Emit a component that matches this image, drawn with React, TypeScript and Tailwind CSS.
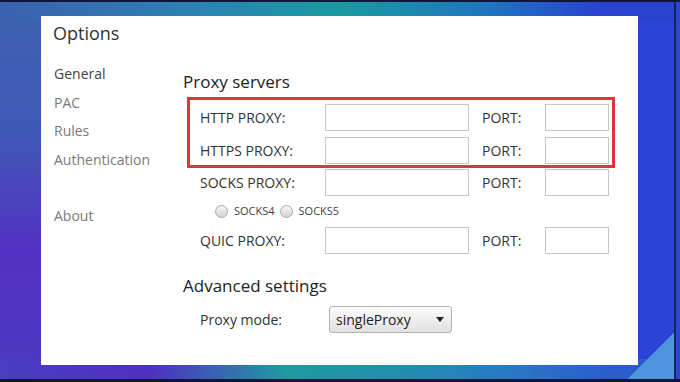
import React from "react";

function ProxyRow({ label }: { label: string }) {
  return (
    <div className="flex items-center h-[27px] pl-[17px]">
      <span className="w-[125px] text-[14px] text-[#333] leading-[27px]">{label}</span>
      <div className="w-[144px] h-[27px] border border-[#c6c6c6] bg-white" />
      <span className="ml-[13px] w-[63px] text-[14px] text-[#333] leading-[27px]">PORT:</span>
      <div className="w-[64px] h-[27px] border border-[#c6c6c6] bg-white" />
    </div>
  );
}

function Radio() {
  return (
    <span className="inline-block w-[13px] h-[13px] rounded-full border border-[#a9a9a9] bg-[linear-gradient(#f6f6f6,#d2d2d2)]" />
  );
}

export default function App() {
  return (
    <div className="w-[680px] h-[382px] overflow-hidden border-t-2 border-b-[3px] border-[#10153a] pt-[14px] pl-[41px] font-['Open_Sans',sans-serif] shadow-[inset_-4px_0_0_#2a46d6,inset_-6px_0_0_#1a2358] [background:linear-gradient(135deg,transparent_95%,#4d95dc_95%),linear-gradient(to_right,#3b60b0,#2a84b2_30%,#1a9aa0_50%,#1f74c0_72%,#2a42d0_88%)_top/100%_17px_no-repeat,linear-gradient(to_right,#4a3ec2,#5030c0_22%,#1e9aa2_42%,#2090ac_58%,#2a78c4_75%,#2a5ccc_90%)_bottom/100%_20px_no-repeat,linear-gradient(to_bottom,#3d62ae,#4058b6_35%,#5232c2_65%,#4c3ac0)_left/41px_100%_no-repeat,#2a44d4]">
      <div className="w-[597px] h-[349px] bg-white flex flex-col">
        <div className="pl-[12px] pt-[5px] text-[18px] leading-[24px] text-[#333]">Options</div>
        <div className="flex">
          <div className="w-[142px] pl-[13px] pt-[15px] flex flex-col text-[14px] leading-[28.5px] text-[#7a7a7a]">
            <span className="text-[#444]">General</span>
            <span>PAC</span>
            <span>Rules</span>
            <span>Authentication</span>
            <span className="h-[28px]" />
            <span>About</span>
          </div>
          <div className="flex-1 pt-[25px]">
            <h2 className="text-[17px] leading-[24px] text-[#222]">Proxy servers</h2>
            <div className="relative mt-[10px] flex flex-col gap-[5.5px]">
              <ProxyRow label="HTTP PROXY:" />
              <ProxyRow label="HTTPS PROXY:" />
              <ProxyRow label="SOCKS PROXY:" />
              <div className="h-[20px] pl-[32px] flex items-center text-[11px] text-[#444]">
                <Radio />
                <span className="ml-[6px]">SOCKS4</span>
                <span className="ml-[5px] flex items-center"><Radio /></span>
                <span className="ml-[6px]">SOCKS5</span>
              </div>
              <ProxyRow label="QUIC PROXY:" />
              <div className="absolute left-[4px] top-[-7px] w-[428px] h-[71px] border-[3px] border-[#e0363b]" />
            </div>
            <h2 className="mt-[20px] text-[17px] leading-[24px] text-[#222]">Advanced settings</h2>
            <div className="mt-[8px] flex items-center h-[27px] pl-[17px]">
              <span className="w-[129px] text-[14px] text-[#333]">Proxy mode:</span>
              <div className="w-[123px] h-[27px] flex items-center justify-between pl-[6px] pr-[7px] border border-[#b3b3b3] rounded-[3px] bg-[linear-gradient(#fcfcfc,#e1e1e1)] text-[14px] text-[#222]">
                <span>singleProxy</span>
                <svg width="8" height="5" viewBox="0 0 8 5"><path d="M0 0H8L4 5Z" fill="#222" /></svg>
              </div>
            </div>
          </div>
        </div>
      </div>
    </div>
  );
}
